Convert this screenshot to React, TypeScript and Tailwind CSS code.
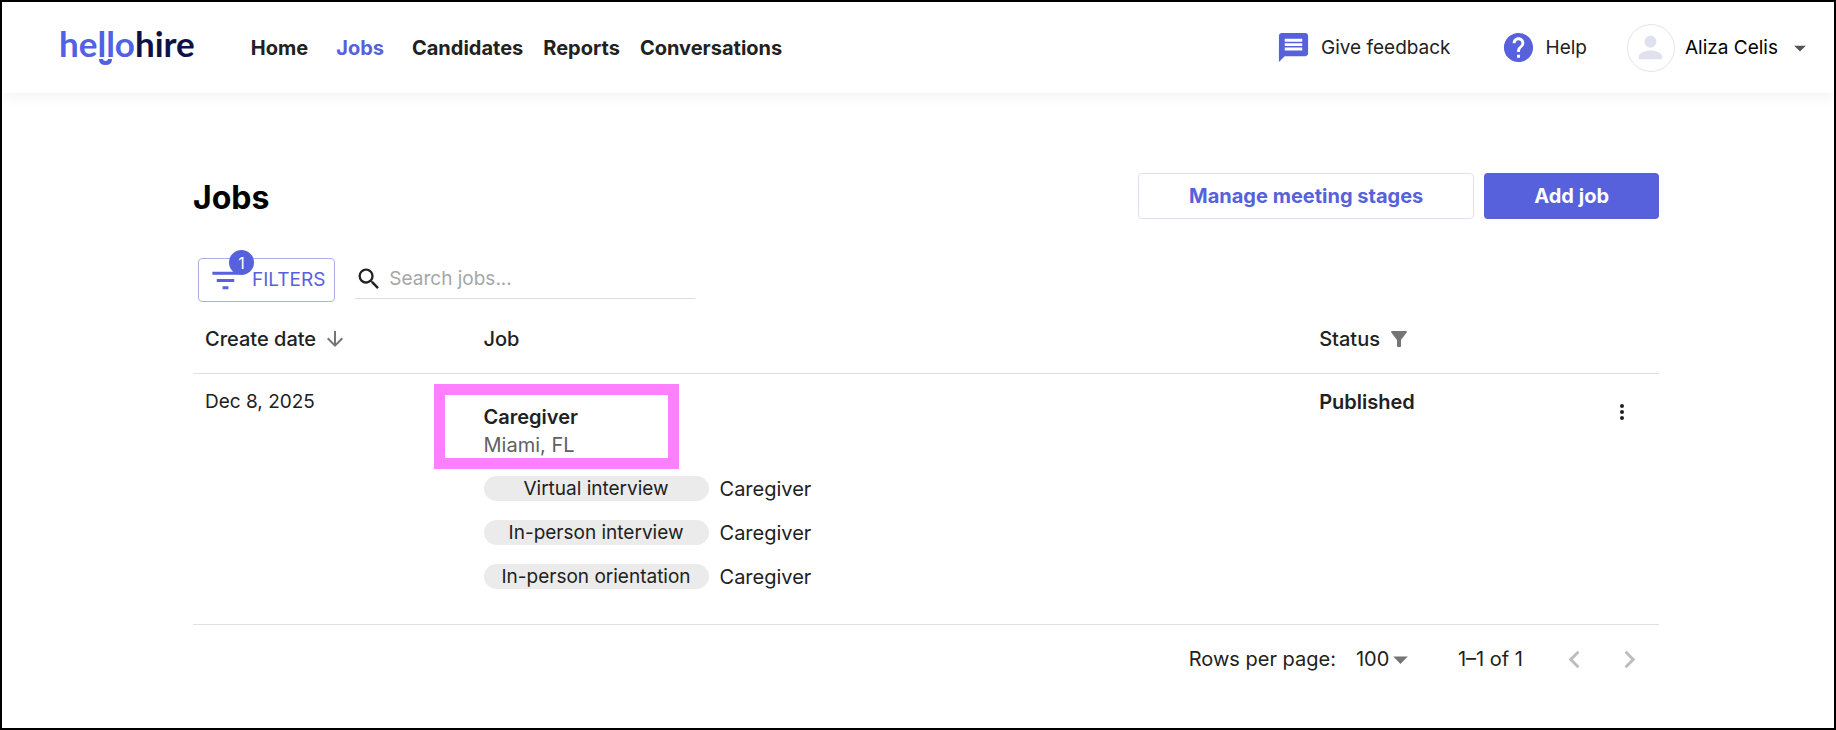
import { useState } from "react";
import {
  MdArrowDownward,
  MdArrowDropDown,
  MdChevronLeft,
  MdChevronRight,
  MdFilterAlt,
  MdFilterList,
  MdHelp,
  MdMessage,
  MdMoreVert,
  MdPerson,
  MdSearch,
} from "react-icons/md";

interface IStage {
  type: string;
  name: string;
}

interface IJob {
  date: string;
  title: string;
  location: string;
  status: string;
  stages: IStage[];
}

const NAV_ITEMS = ["Home", "Jobs", "Candidates", "Reports", "Conversations"];

const JOBS: IJob[] = [
  {
    date: "Dec 8, 2025",
    title: "Caregiver",
    location: "Miami, FL",
    status: "Published",
    stages: [
      { type: "Virtual interview", name: "Caregiver" },
      { type: "In-person interview", name: "Caregiver" },
      { type: "In-person orientation", name: "Caregiver" },
    ],
  },
];

function Logo() {
  return (
    <a
      href="#"
      className="relative mb-[10px] font-['Lato',sans-serif] text-[35px] leading-10 font-bold text-[#5161e3]"
    >
      hello<span className="text-[#0c1248]">hire</span>
      <svg
        className="absolute top-9 left-10"
        width="13"
        height="7"
        viewBox="0 0 13 7"
        fill="none"
        stroke="currentColor"
        strokeWidth="4"
      >
        <path d="M2 0c0 2.900 2 4 4.500 4s4.500-1.100 4.500-4" />
      </svg>
    </a>
  );
}

function Header() {
  return (
    <header className="flex h-[91px] items-center pr-5 pl-[57px] shadow-[0_4px_12px_rgba(0,0,0,0.05)]">
      <Logo />
      <nav className="ml-14 flex gap-5 font-bold">
        {NAV_ITEMS.map((item) => (
          <a key={item} href="#" className={item === "Jobs" ? "mx-2 text-[#5661db]" : ""}>
            {item}
          </a>
        ))}
      </nav>
      <div className="ml-auto flex items-center text-[19px]">
        <a href="#" className="flex items-center gap-[10px]">
          <MdMessage className="size-[35px] text-[#5661db]" />
          Give feedback
        </a>
        <a href="#" className="ml-[50px] flex items-center gap-[10px]">
          <MdHelp className="size-[35px] text-[#5661db]" />
          Help
        </a>
        <button type="button" className="ml-10 flex items-center text-black">
          <span className="mr-[10px] flex size-12 items-center justify-center rounded-full border border-[#e2e3f0]">
            <MdPerson className="size-[35px] text-[#dfe1ee]" />
          </span>
          Aliza Celis
          <MdArrowDropDown className="ml-2 size-7 text-[#555]" />
        </button>
      </div>
    </header>
  );
}

export default function App() {
  const [search, setSearch] = useState<string>("");
  const [rows, setRows] = useState<string>("100");

  return (
    <div className="min-h-screen border-2 border-black bg-white font-['Inter',sans-serif] text-xl leading-7 text-[#212121]">
      <Header />
      <main className="pt-20 pr-[175px] pl-[191px]">
        <div className="flex items-center justify-between">
          <h1 className="pt-1 text-[32px] leading-10 font-bold text-black">Jobs</h1>
          <div className="flex gap-[10px] font-bold">
            <button
              type="button"
              className="h-[46px] rounded border border-[#dfe0f0] px-[50px] text-[#5661db]"
            >
              Manage meeting stages
            </button>
            <button type="button" className="h-[46px] rounded bg-[#5661db] px-[50px] text-white">
              Add job
            </button>
          </div>
        </div>

        <div className="mt-9 flex items-end gap-5 pl-[5px] text-[19px]">
          <button
            type="button"
            className="relative mt-[3px] flex h-11 items-center gap-[9px] rounded border border-[#aab0ed] px-[9px] text-[#5661db]"
          >
            <MdFilterList className="size-[35px]" />
            FILTERS
            <span className="absolute -top-[9px] left-[30px] flex size-[25px] items-center justify-center rounded-full bg-[#5661db] text-base text-white">
              1
            </span>
          </button>
          <label className="mb-[3px] flex h-10 w-[340px] items-center border-b border-[#dedede]">
            <MdSearch className="size-7" />
            <input
              type="text"
              aria-label="Search jobs"
              placeholder="Search jobs..."
              value={search}
              onChange={(e) => setSearch(e.target.value)}
              className="ml-[6px] min-w-0 flex-1 outline-none placeholder:text-[#a6a6a6]"
            />
          </label>
        </div>

        <table className="w-full table-fixed text-left">
          <thead>
            <tr className="h-[71px] border-b border-[#e0e0e0]">
              <th className="w-[19%] px-3 pt-1 font-medium">
                <span className="flex items-center gap-[7px]">
                  Create date
                  <MdArrowDownward className="size-6 text-[#757575]" />
                </span>
              </th>
              <th className="w-[57%] px-3 pt-1 font-medium">Job</th>
              <th className="w-[17%] px-3 pt-1 font-medium">
                <span className="flex items-center gap-[7px]">
                  Status
                  <MdFilterAlt className="size-6 text-[#757575]" />
                </span>
              </th>
              <th aria-label="Actions" />
            </tr>
          </thead>
          <tbody>
            {JOBS.map((job, index) => (
              <tr key={index} className="border-b border-[#e0e0e0] align-top">
                <td className="px-3 pt-[14px] text-[19px]">{job.date}</td>
                <td className="px-3 pt-[29px] pb-[33px]">
                  <div className="relative mb-4">
                    <p className="font-semibold">{job.title}</p>
                    <p className="text-[#616161]">{job.location}</p>
                    <div className="pointer-events-none absolute -top-[19px] -left-[50px] h-[85px] w-[245px] border-11 border-[#ff80ff]" />
                  </div>
                  <ul className="flex flex-col gap-4">
                    {job.stages.map((stage) => (
                      <li key={stage.type} className="flex items-center gap-[11px]">
                        <span className="w-[225px] rounded-full bg-[#ebebeb] text-center text-[19px] leading-[25px]">
                          {stage.type}
                        </span>
                        {stage.name}
                      </li>
                    ))}
                  </ul>
                </td>
                <td className="px-3 pt-[14px] font-semibold">{job.status}</td>
                <td className="pt-[26px] pr-[25px]">
                  <button type="button" aria-label="Job actions" className="ml-auto block">
                    <MdMoreVert className="size-6" />
                  </button>
                </td>
              </tr>
            ))}
          </tbody>
        </table>

        <div className="flex items-center justify-end py-[17px] pr-3">
          <label htmlFor="rows">Rows per page:</label>
          <div className="relative ml-5 flex items-center">
            <select
              id="rows"
              value={rows}
              onChange={(e) => setRows(e.target.value)}
              className="w-[58px] appearance-none outline-none"
            >
              <option>100</option>
              <option>50</option>
            </select>
            <MdArrowDropDown className="pointer-events-none absolute -right-1 size-[35px] text-[#757575]" />
          </div>
          <span className="ml-11">1–1 of 1</span>
          <button type="button" aria-label="Previous page" disabled className="ml-[34px] text-[#bdbdbd]">
            <MdChevronLeft className="size-[35px]" />
          </button>
          <button type="button" aria-label="Next page" disabled className="ml-5 text-[#bdbdbd]">
            <MdChevronRight className="size-[35px]" />
          </button>
        </div>
      </main>
    </div>
  );
}
